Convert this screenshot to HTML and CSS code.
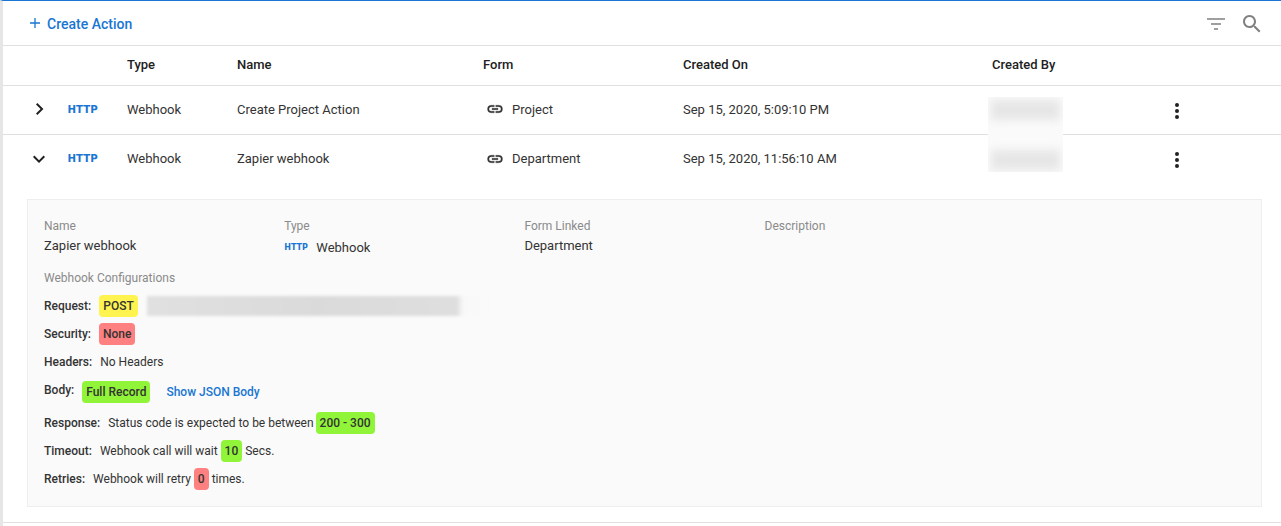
FILE: index.html
```html
<!DOCTYPE html>
<html lang="en">
<head>
<meta charset="utf-8">
<title>Actions</title>
<link rel="stylesheet" href="styles.css">
</head>
<body>
<div class="app">
  <div class="toolbar">
    <a class="create"><svg class="plus" viewBox="0 0 12 12" width="12" height="12"><path d="M6 1v10M1 6h10" stroke="#1976d2" stroke-width="1.3" fill="none"/></svg>Create Action</a>
    <div class="tools">
      <svg viewBox="0 0 24 24" width="24" height="24"><path d="M3 6.2h18v1.6H3zM7 11.2h10v1.6H7zM10 16.2h4v1.6h-4z" fill="#808080"/></svg>
      <svg viewBox="0 0 24 24" width="24" height="24"><path d="M15.5 14h-.79l-.28-.27C15.41 12.59 16 11.11 16 9.5 16 5.91 13.09 3 9.5 3S3 5.91 3 9.5 5.91 16 9.5 16c1.61 0 3.09-.59 4.23-1.57l.27.28v.79l5 4.99L20.49 19l-4.99-5zm-6 0C7.01 14 5 11.99 5 9.5S7.01 5 9.5 5 14 7.01 14 9.5 11.99 14 9.5 14z" fill="#808080"/></svg>
    </div>
  </div>
  <div class="grid head">
    <span></span><span></span><span>Type</span><span>Name</span><span>Form</span><span>Created On</span><span>Created By</span><span></span>
  </div>
  <div class="grid row bordered">
    <svg class="chev right" viewBox="0 0 24 24" width="24" height="24"><path d="M9.4 6.5 8 7.9l4.6 4.6L8 17.1l1.4 1.4 6-6z" fill="#212121" transform="translate(0 -.5)"/></svg>
    <span class="http">HTTP</span><span>Webhook</span><span>Create Project Action</span>
    <span class="form"><svg viewBox="0 0 24 24" width="18" height="18"><path d="M3.9 12c0-1.7 1.4-3.1 3.1-3.1h4V7H7a5 5 0 0 0 0 10h4v-1.9H7A3.1 3.1 0 0 1 3.9 12zM8 13h8v-2H8v2zm9-6h-4v1.9h4a3.1 3.1 0 0 1 0 6.2h-4V17h4a5 5 0 0 0 0-10z" fill="#333" stroke="#333" stroke-width=".4"/></svg>Project</span>
    <span>Sep 15, 2020, 5:09:10 PM</span><span></span>
    <svg class="kebab first" viewBox="0 0 24 24" width="24" height="24"><path d="M12 8a2 2 0 1 0 0-4 2 2 0 0 0 0 4zm0 2a2 2 0 1 0 0 4 2 2 0 0 0 0-4zm0 6a2 2 0 1 0 0 4 2 2 0 0 0 0-4z" fill="#212121"/></svg>
  </div>
  <div class="grid row">
    <svg class="chev" viewBox="0 0 24 24" width="24" height="24"><path d="M7.4 8.6 12 13.2l4.6-4.6L18 10l-6 6-6-6z" fill="#212121"/></svg>
    <span class="http">HTTP</span><span>Webhook</span><span>Zapier webhook</span>
    <span class="form"><svg viewBox="0 0 24 24" width="18" height="18"><path d="M3.9 12c0-1.7 1.4-3.1 3.1-3.1h4V7H7a5 5 0 0 0 0 10h4v-1.9H7A3.1 3.1 0 0 1 3.9 12zM8 13h8v-2H8v2zm9-6h-4v1.9h4a3.1 3.1 0 0 1 0 6.2h-4V17h4a5 5 0 0 0 0-10z" fill="#333" stroke="#333" stroke-width=".4"/></svg>Department</span>
    <span>Sep 15, 2020, 11:56:10 AM</span><span></span>
    <svg class="kebab" viewBox="0 0 24 24" width="24" height="24"><path d="M12 8a2 2 0 1 0 0-4 2 2 0 0 0 0 4zm0 2a2 2 0 1 0 0 4 2 2 0 0 0 0-4zm0 6a2 2 0 1 0 0 4 2 2 0 0 0 0-4z" fill="#212121"/></svg>
  </div>
  <div class="blurbox"><i></i><i></i></div>
  <div class="detail">
    <div class="summary">
      <div><div class="lbl">Name</div><div class="val">Zapier webhook</div></div>
      <div><div class="lbl">Type</div><div class="val typeval"><span class="http small">HTTP</span>Webhook</div></div>
      <div><div class="lbl">Form Linked</div><div class="val">Department</div></div>
      <div><div class="lbl">Description</div></div>
    </div>
    <div class="lbl conf">Webhook Configurations</div>
    <div class="cfg c1"><b>Request:</b><span class="chip y">POST</span><span class="urlblur"></span></div>
    <div class="cfg c2"><b>Security:</b><span class="chip r">None</span></div>
    <div class="cfg c3"><b>Headers:</b><span>No Headers</span></div>
    <div class="cfg c4"><b class="up">Body:</b><span class="chip g">Full Record</span><a class="json">Show JSON Body</a></div>
    <div class="cfg c5"><b>Response:</b><span class="txt tight">Status code is expected to be between</span><span class="chip g">200 - 300</span></div>
    <div class="cfg c6"><b>Timeout:</b><span class="txt">Webhook call will wait</span><span class="chip g">10</span><span class="txt">Secs.</span></div>
    <div class="cfg c6"><b>Retries:</b><span class="txt">Webhook will retry</span><span class="chip r">0</span><span class="txt">times.</span></div>
  </div>
  <div class="endline"></div>
</div>
</body>
</html>
```
FILE: styles.css
```css
* { box-sizing: border-box; }
html, body { margin: 0; height: 100%; overflow: hidden; background: #fff; }
body { font-family: Roboto, "Liberation Sans", sans-serif; font-size: 13px; color: #333; }
.app { position: relative; height: 526px; border-left: 3px solid #e6e6e6; border-top: 1px solid #1976d2; }
.toolbar { height: 45px; display: flex; align-items: center; justify-content: space-between; padding: 2px 17px 0 25px; border-bottom: 1px solid #e0e0e0; }
.create { display: flex; align-items: center; color: #1976d2; font-size: 14px; font-weight: 500; }
.plus { margin: -3px 6px 0 1px; }
.tools { display: flex; gap: 12px; margin-top: -1px; }
.tools svg { display: block; }
.grid { display: grid; grid-template-columns: 65px 59px 110px 246px 200px 309px 173px 1fr; align-items: center; }
.head { height: 40px; padding-bottom: 2px; border-bottom: 1px solid #e0e0e0; font-weight: 500; font-size: 13px; color: #212121; }
.row { height: 49px; padding-bottom: 2px; }
.bordered { border-bottom: 1px solid #e0e0e0; }
.chev { margin-left: 24px; }
.chev.right { margin-left: 25px; }
.kebab { margin-top: 2px; }
.kebab.first { margin-top: 4px; }
.http { font-family: "DejaVu Sans", sans-serif; color: #1976d2; font-size: 10.2px; font-weight: 700; margin-left: -.5px; }
.http.small { font-size: 8px; margin: 0 8.5px 0 0; }
.form { display: flex; align-items: center; gap: 8px; margin-left: 3px; }
.blurbox { position: absolute; left: 985px; top: 96px; width: 75px; height: 75px; background: #fafafa; display: flex; flex-direction: column; justify-content: space-between; padding: 3px 3px 2px; overflow: hidden; }
.blurbox i { display: block; height: 20px; background: #e6e6e6; filter: blur(4px); }
.detail { margin: 15px 19px 0 24px; height: 308px; background: #fafafa; border: 1px solid #eee; padding: 19px 16px 0; }
.summary { display: grid; grid-template-columns: repeat(3, 240.2px) 1fr; }
.lbl { font-size: 12px; color: #8a8a8a; line-height: 14px; }
.val { font-size: 13px; color: #333; line-height: 16px; margin-top: 5px; }
.typeval { display: flex; align-items: center; margin-top: 7px; }
.conf { margin-top: 15px; }
.cfg { display: flex; align-items: center; font-size: 12px; color: #333; margin-top: 6px; height: 22px; }
.cfg b { font-weight: 500; color: #333; margin-right: 8px; }
.cfg b.up { margin-top: -4px; }
.c1 { margin-top: 10px; }
.c4 { margin-top: 8px; }
.c5 { margin-top: 9px; }
.txt { margin-right: 3px; }
.txt.tight { margin-right: 2px; }
.chip { display: inline-block; padding: 0 4px; height: 22px; line-height: 22px; border-radius: 4px; font-weight: 500; color: #333; margin-right: 3px; }
.y { background: #fff44f; }
.r { background: #ff8080; }
.g { background: #90f538; }
.json { color: #1976d2; font-weight: 500; margin-left: 13px; }
.urlblur { width: 340px; height: 20px; margin-left: 6px; background: linear-gradient(90deg, #e0e0e0 0, #dadada 50%, #dedede 91%, #f8f8f8 93%, #fafafa 100%); filter: blur(1.5px); }
.endline { position: absolute; left: 0; right: 0; top: 521px; height: 1px; background: #e0e0e0; }
```
